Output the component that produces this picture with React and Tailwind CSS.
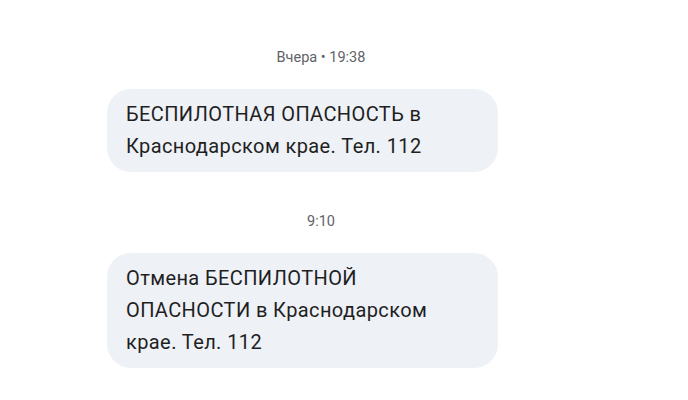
import React from 'react';

const messages = [
  {
    time: 'Вчера • 19:38',
    lines: ['БЕСПИЛОТНАЯ ОПАСНОСТЬ в', 'Краснодарском крае. Тел. 112'],
  },
  {
    time: '9:10',
    lines: ['Отмена БЕСПИЛОТНОЙ', 'ОПАСНОСТИ в Краснодарском', 'крае. Тел. 112'],
  },
];

function App() {
  return (
    <div className="w-[688px] h-[400px] bg-white overflow-hidden font-['Roboto',sans-serif]">
      <div className="w-[642px] pt-[48px] flex flex-col">
        {messages.map((msg, i) => (
          <div key={i} className={i > 0 ? 'mt-[40px]' : ''}>
            <div className="text-center text-[14.5px] leading-[20px] text-[#5f6368]">{msg.time}</div>
            <div className="mt-[21px] ml-[107px] w-[391px] rounded-[24px] bg-[#eef1f6] pl-[19px] pr-[12px] pt-[9px] pb-[10px] text-[20px] leading-[32px] tracking-[0.4px] text-[#1f1f1f]">
              {msg.lines.map((line, j) => (
                <div key={j} className="whitespace-nowrap">{line}</div>
              ))}
            </div>
          </div>
        ))}
      </div>
    </div>
  );
}

export default App;
